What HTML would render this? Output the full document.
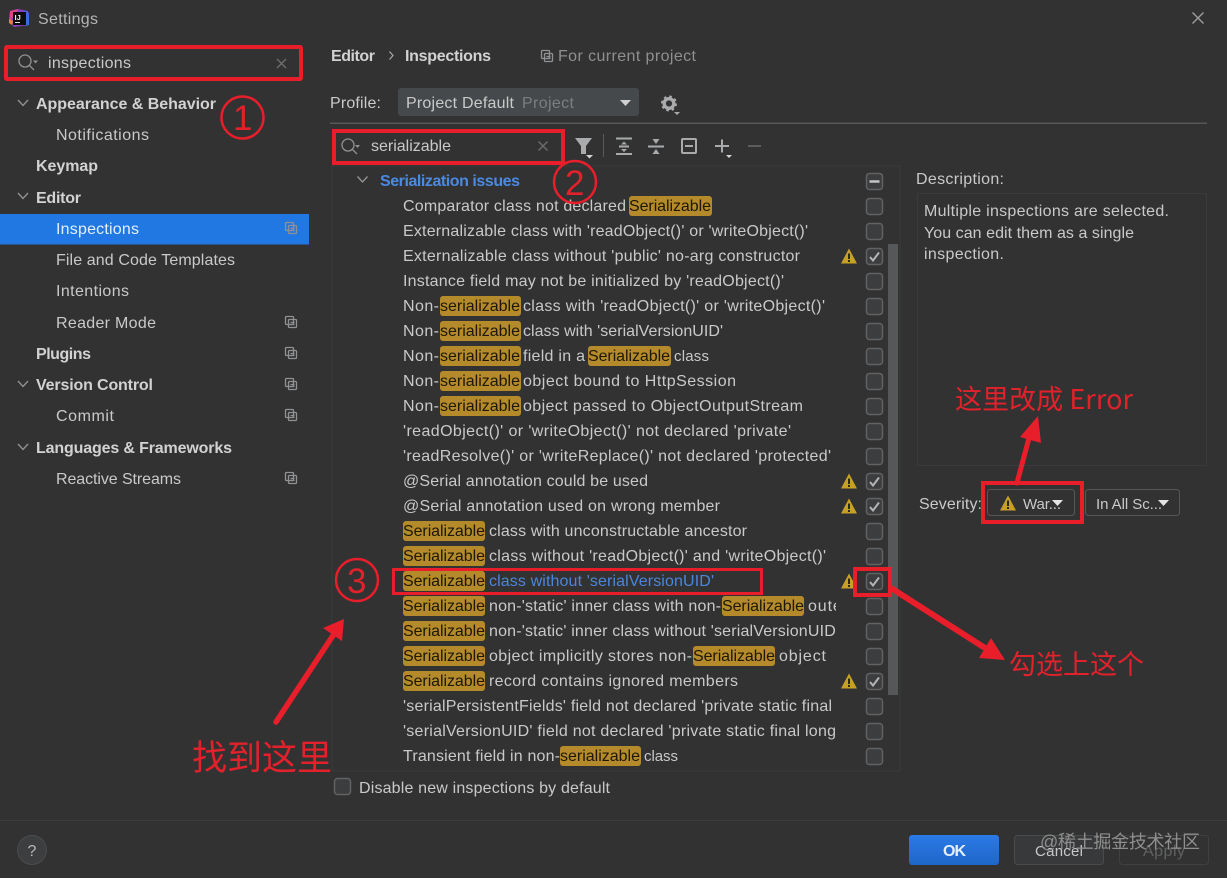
<!DOCTYPE html>
<html lang="en"><head><meta charset="utf-8"><title>Settings</title>
<style>
html,body{margin:0;padding:0;background:#323233;width:1227px;height:878px;overflow:hidden}
svg{display:block}
text{font-family:"Liberation Sans","Noto Sans CJK SC",sans-serif;font-size:16px;fill:#c9c9c9}
.b{font-weight:bold;fill:#d2d2d2}
.h{fill:#b48a2a}
.d{fill:#1d1808}
.s{font-size:15px}
.box{fill:#3b3d3e;stroke:#606263;stroke-width:1.5}
.ck{fill:none;stroke:#b4b4b4;stroke-width:2}
.r{fill:none;stroke:#e81f2b}
.a{font-family:"Noto Sans CJK SC","Liberation Sans",sans-serif;fill:#e2212b}
.ic{fill:none;stroke:#8f9192;stroke-width:1.3}
.t{fill:#c8a028}
.tb{fill:none;stroke:#a8aaab;stroke-width:2}
.n{fill:#e2212b;font-size:35px}
</style></head><body>
<svg width="1227" height="878" viewBox="0 0 1227 878" xmlns="http://www.w3.org/2000/svg">
<defs>
<clipPath id="c"><rect x="333" y="168" width="503" height="602"/></clipPath>
<linearGradient id="ok" x1="0" y1="0" x2="0" y2="1"><stop offset="0" stop-color="#2a7ae6"/><stop offset="1" stop-color="#1f66c9"/></linearGradient>
<g id="w"><path d="M7 -0.5L15 14.500H-1Z" class="t"/><rect x="6" y="4.500" width="2" height="5.500" fill="#2a2a22"/><rect x="6" y="11" width="2" height="2" fill="#2a2a22"/></g>
<g id="p"><rect x="0.5" y="0.5" width="8" height="8" class="ic" rx="1"/><rect x="3.5" y="3.5" width="8" height="8" class="ic" fill="#323233" rx="1"/><path d="M5.5 6.5h4M5.5 8.5h4" class="ic"/></g>
</defs>
<rect width="1227" height="878" fill="#323233"/>

<!-- title -->
<path d="M10 11L18 9L28 11L29 25L14 27L9 21Z" fill="#8a3fc0"/><path d="M10 11L18 9L15 16L9 21Z" fill="#e0428a"/><path d="M9 19L13 21L12 25L9 23Z" fill="#f08030"/><path d="M24 10L29 13L29 25L25 26Z" fill="#3a6be0"/>
<rect x="13" y="12" width="13" height="13" fill="#0d0d0d"/>
<text x="14.5" y="20" style="font-size:7.5px;font-weight:bold;fill:#eee">IJ</text><rect x="15" y="22" width="5" height="1" fill="#ddd"/>
<text x="38" y="24" textLength="60" style="fill:#b5b5b5">Settings</text>
<path d="M1192.500 12.500L1203.500 23.500M1203.500 12.500L1192.500 23.500" stroke="#a0a0a0" stroke-width="1.3" fill="none"/>

<!-- sidebar -->
<rect x="0" y="214" width="309" height="30.500" fill="#2278e2"/>
<circle cx="25" cy="61" r="6" class="ic"/><path d="M29.500 65.500L34 70" class="ic"/><path d="M33 60.500h5l-2.500 3z" fill="#8f9192"/>
<text x="48" y="68" textLength="83">inspections</text>
<path d="M277 59L286 68M286 59L277 68" stroke="#6c6e6f" stroke-width="1.3" fill="none"/>
<g fill="none" stroke="#8f9192" stroke-width="1.4"><path d="M18 100L23 105.500L28 100"/><path d="M18 193L23 198.500L28 193"/><path d="M18 381L23 386.500L28 381"/><path d="M18 444L23 449.500L28 444"/></g>
<text x="36" y="109" class="b" textLength="180">Appearance &amp; Behavior</text>
<text x="56" y="140" textLength="93">Notifications</text>
<text x="36" y="171" class="b" textLength="62">Keymap</text>
<text x="36" y="203" class="b" textLength="45">Editor</text>
<text x="56" y="234" textLength="83" style="fill:#e4eefa">Inspections</text>
<text x="56" y="265" textLength="179">File and Code Templates</text>
<text x="56" y="296" textLength="73">Intentions</text>
<text x="56" y="328" textLength="100">Reader Mode</text>
<text x="36" y="359" class="b" textLength="55">Plugins</text>
<text x="36" y="390" class="b" textLength="117">Version Control</text>
<text x="56" y="421" textLength="58">Commit</text>
<text x="36" y="453" class="b" textLength="196">Languages &amp; Frameworks</text>
<text x="56" y="484" textLength="125">Reactive Streams</text>
<use href="#p" x="285" y="222"/><use href="#p" x="285" y="316"/><use href="#p" x="285" y="347"/><use href="#p" x="285" y="378"/><use href="#p" x="285" y="409"/><use href="#p" x="285" y="472"/>

<!-- header -->
<text x="331" y="61" class="b" textLength="44">Editor</text>
<path d="M389.500 51.500L393 55.500L389.500 59.500" fill="none" stroke="#a8a8a8" stroke-width="1.200"/>
<text x="405" y="61" class="b" textLength="86">Inspections</text>
<use href="#p" x="541" y="50"/>
<text x="558" y="61" textLength="138" style="fill:#8f8f8f">For current project</text>
<text x="330" y="108" textLength="51">Profile:</text>
<rect x="398" y="88" width="241" height="28" rx="3" fill="#46494b"/>
<text x="406" y="108" textLength="108">Project Default</text>
<text x="522" y="108" textLength="52" style="fill:#7b7d7e">Project</text>
<path d="M620 100h11l-5.500 6z" fill="#d0d0d0"/>
<circle cx="669" cy="103.500" r="4.800" fill="none" stroke="#a9abac" stroke-width="3.400"/>
<circle cx="669" cy="103.500" r="7" fill="none" stroke="#a9abac" stroke-width="2" stroke-dasharray="2.600 2.900"/>
<path d="M674 112h6l-3 3z" fill="#a9abac"/>
<rect x="330" y="122.500" width="877" height="1.500" fill="#565758"/>

<!-- toolbar -->
<circle cx="348" cy="145" r="6" class="ic"/><path d="M352.500 149.500L357 154" class="ic"/><path d="M355 145h5l-2.500 3z" fill="#8f9192"/>
<text x="371" y="151" textLength="80">serializable</text>
<path d="M538.500 141.500L547.500 150.500M547.500 141.500L538.500 150.500" stroke="#6c6e6f" stroke-width="1.300" fill="none"/>
<path d="M575 138h17l-6 8v8h-5v-8z" fill="#a9abac"/><path d="M586 155h7l-3.500 3.500z" fill="#d5d5d5"/>
<rect x="603" y="134" width="1" height="23" fill="#58595a"/>
<g class="tb"><path d="M616 138.500h16M616 154h16M619 146.500h10"/></g>
<path d="M624 141.500l3 3h-6zM624 152l3-3h-6z" fill="#a8aaab"/>
<g class="tb"><path d="M648 146.500h16"/></g><path d="M656 144l-3.500-5h7zM656 149l-3.500 5h7z" fill="#a8aaab"/>
<rect x="682" y="139" width="14" height="14" rx="1" class="tb"/><path d="M685 146h8" class="tb"/>
<path d="M722 139.500v13M715 146h14" class="tb"/><path d="M726 155h6l-3 3z" fill="#d5d5d5"/>
<path d="M748 146h13" stroke="#5a5c5d" stroke-width="2" fill="none"/>

<!-- list frame -->
<path d="M332 166H900V771H332Z" fill="none" stroke="#38393a"/>
<path d="M357.500 176.500L362.500 182L367.500 176.500" fill="none" stroke="#8f9192" stroke-width="1.400"/>
<text x="380" y="186" textLength="140" style="fill:#4a8ae0;font-weight:bold">Serialization issues</text>
<rect x="888" y="244" width="10" height="451" fill="#565758"/>

<g clip-path="url(#c)">
<rect class="h" x="629" y="196" width="83" height="20" rx="3"/>
<rect class="h" x="440" y="296" width="81" height="20" rx="3"/>
<rect class="h" x="440" y="321" width="81" height="20" rx="3"/>
<rect class="h" x="440" y="346" width="81" height="20" rx="3"/>
<rect class="h" x="588" y="346" width="83" height="20" rx="3"/>
<rect class="h" x="440" y="371" width="81" height="20" rx="3"/>
<rect class="h" x="440" y="396" width="81" height="20" rx="3"/>
<rect class="h" x="403" y="521" width="82" height="20" rx="3"/>
<rect class="h" x="403" y="546" width="82" height="20" rx="3"/>
<rect class="h" x="403" y="571" width="82" height="20" rx="3"/>
<rect class="h" x="403" y="596" width="82" height="20" rx="3"/>
<rect class="h" x="722" y="596" width="82" height="20" rx="3"/>
<rect class="h" x="403" y="621" width="82" height="20" rx="3"/>
<rect class="h" x="403" y="646" width="82" height="20" rx="3"/>
<rect class="h" x="693" y="646" width="82" height="20" rx="3"/>
<rect class="h" x="403" y="671" width="82" height="20" rx="3"/>
<rect class="h" x="560" y="746" width="81" height="20" rx="3"/>

<text x="403" y="211" textLength="223">Comparator class not declared</text>
<text x="629" y="211" textLength="82" class="d">Serializable</text>
<text x="403" y="236" textLength="405">Externalizable class with 'readObject()' or 'writeObject()'</text>
<text x="403" y="261" textLength="397">Externalizable class without 'public' no-arg constructor</text>
<text x="403" y="286" textLength="381">Instance field may not be initialized by 'readObject()'</text>
<text x="403" y="311" textLength="36">Non-</text><text x="440" y="311" textLength="80" class="d">serializable</text><text x="523" y="311" textLength="302">class with 'readObject()' or 'writeObject()'</text>
<text x="403" y="336" textLength="36">Non-</text><text x="440" y="336" textLength="80" class="d">serializable</text><text x="523" y="336" textLength="200">class with 'serialVersionUID'</text>
<text x="403" y="361" textLength="36">Non-</text><text x="440" y="361" textLength="80" class="d">serializable</text><text x="523" y="361" textLength="62">field in a</text><text x="588" y="361" textLength="82" class="d">Serializable</text><text x="674" y="361" textLength="35" class="s">class</text>
<text x="403" y="386" textLength="36">Non-</text><text x="440" y="386" textLength="80" class="d">serializable</text><text x="523" y="386" textLength="213">object bound to HttpSession</text>
<text x="403" y="411" textLength="36">Non-</text><text x="440" y="411" textLength="80" class="d">serializable</text><text x="523" y="411" textLength="280">object passed to ObjectOutputStream</text>
<text x="403" y="436" textLength="388">'readObject()' or 'writeObject()' not declared 'private'</text>
<text x="403" y="461" textLength="428">'readResolve()' or 'writeReplace()' not declared 'protected'</text>
<text x="403" y="486" textLength="245">@Serial annotation could be used</text>
<text x="403" y="511" textLength="317">@Serial annotation used on wrong member</text>
<text x="403" y="536" textLength="82" class="d">Serializable</text><text x="489" y="536" textLength="258">class with unconstructable ancestor</text>
<text x="403" y="561" textLength="82" class="d">Serializable</text><text x="489" y="561" textLength="337">class without 'readObject()' and 'writeObject()'</text>
<text x="403" y="586" textLength="82" class="d">Serializable</text><text x="489" y="586" textLength="225" style="fill:#4a86dc">class without 'serialVersionUID'</text>
<text x="403" y="611" textLength="82" class="d">Serializable</text><text x="489" y="611" textLength="232">non-'static' inner class with non-</text><text x="722" y="611" textLength="82" class="d">Serializable</text><text x="808" y="611" textLength="40">outer</text>
<text x="403" y="636" textLength="82" class="d">Serializable</text><text x="489" y="636" textLength="350">non-'static' inner class without 'serialVersionUID'</text>
<text x="403" y="661" textLength="82" class="d">Serializable</text><text x="489" y="661" textLength="203">object implicitly stores non-</text><text x="693" y="661" textLength="82" class="d">Serializable</text><text x="779" y="661" textLength="47">object</text>
<text x="403" y="686" textLength="82" class="d">Serializable</text><text x="489" y="686" textLength="249">record contains ignored members</text>
<text x="403" y="711" textLength="429">'serialPersistentFields' field not declared 'private static final</text>
<text x="403" y="736" textLength="433">'serialVersionUID' field not declared 'private static final long</text>
<text x="403" y="761" textLength="157">Transient field in non-</text><text x="560" y="761" textLength="80" class="d">serializable</text><text x="644" y="761" textLength="34" class="s">class</text>
</g>

<!-- checkboxes -->
<rect class="box" x="866.500" y="173.500" width="16" height="16" rx="3"/><path d="M869.500 181.500h10" stroke="#c5c5c5" stroke-width="2.500"/>
<rect class="box" x="866.500" y="198.500" width="16" height="16" rx="3"/>
<rect class="box" x="866.500" y="223.500" width="16" height="16" rx="3"/>
<rect class="box" x="866.500" y="248.500" width="16" height="16" rx="3"/><path class="ck" d="M870 257l3 3.500 6-8"/>
<rect class="box" x="866.500" y="273.500" width="16" height="16" rx="3"/>
<rect class="box" x="866.500" y="298.500" width="16" height="16" rx="3"/>
<rect class="box" x="866.500" y="323.500" width="16" height="16" rx="3"/>
<rect class="box" x="866.500" y="348.500" width="16" height="16" rx="3"/>
<rect class="box" x="866.500" y="373.500" width="16" height="16" rx="3"/>
<rect class="box" x="866.500" y="398.500" width="16" height="16" rx="3"/>
<rect class="box" x="866.500" y="423.500" width="16" height="16" rx="3"/>
<rect class="box" x="866.500" y="448.500" width="16" height="16" rx="3"/>
<rect class="box" x="866.500" y="473.500" width="16" height="16" rx="3"/><path class="ck" d="M870 482l3 3.500 6-8"/>
<rect class="box" x="866.500" y="498.500" width="16" height="16" rx="3"/><path class="ck" d="M870 507l3 3.500 6-8"/>
<rect class="box" x="866.500" y="523.500" width="16" height="16" rx="3"/>
<rect class="box" x="866.500" y="548.500" width="16" height="16" rx="3"/>
<rect class="box" x="866.500" y="573.500" width="16" height="16" rx="3"/><path class="ck" d="M870 582l3 3.500 6-8"/>
<rect class="box" x="866.500" y="598.500" width="16" height="16" rx="3"/>
<rect class="box" x="866.500" y="623.500" width="16" height="16" rx="3"/>
<rect class="box" x="866.500" y="648.500" width="16" height="16" rx="3"/>
<rect class="box" x="866.500" y="673.500" width="16" height="16" rx="3"/><path class="ck" d="M870 682l3 3.500 6-8"/>
<rect class="box" x="866.500" y="698.500" width="16" height="16" rx="3"/>
<rect class="box" x="866.500" y="723.500" width="16" height="16" rx="3"/>
<rect class="box" x="866.500" y="748.500" width="16" height="16" rx="3"/>
<use href="#w" x="842" y="249"/><use href="#w" x="842" y="474"/><use href="#w" x="842" y="499"/><use href="#w" x="842" y="574"/><use href="#w" x="842" y="674"/>

<!-- description -->
<text x="916" y="184" textLength="88">Description:</text>
<rect x="917.500" y="193.500" width="289" height="272" fill="none" stroke="#3a3b3c"/>
<text x="924" y="216" textLength="245">Multiple inspections are selected.</text>
<text x="924" y="238" textLength="210">You can edit them as a single</text>
<text x="924" y="259" textLength="80">inspection.</text>
<text x="919" y="509" textLength="63">Severity:</text>
<rect x="987.500" y="489.500" width="87" height="26" rx="3" fill="none" stroke="#565758"/>
<use href="#w" x="1001" y="496"/>
<text x="1023" y="509" textLength="38" class="s">War...</text>
<path d="M1052 500h11l-5.500 6z" fill="#e4e4e4"/>
<rect x="1085.500" y="489.500" width="94" height="26" rx="3" fill="none" stroke="#565758"/>
<text x="1096" y="509" textLength="66" class="s">In All Sc...</text>
<path d="M1158 500h11l-5.500 6z" fill="#e4e4e4"/>

<!-- bottom -->
<rect class="box" x="334.500" y="778.500" width="16" height="16" rx="3"/>
<text x="359" y="793" textLength="251">Disable new inspections by default</text>
<rect x="0" y="820" width="1227" height="1" fill="#3c3d3e"/>
<circle cx="32" cy="850" r="14.500" fill="#3c3e40" stroke="#4a4c4d"/>
<text x="27.500" y="856" textLength="9" style="fill:#b8b8b8">?</text>
<rect x="909" y="835" width="90" height="30" rx="3" fill="url(#ok)"/>
<text x="943" y="856" textLength="23" class="b" style="fill:#e4effc">OK</text>
<rect x="1014.500" y="835.500" width="89" height="29" rx="3" fill="#37393a" stroke="#4a4b4c"/>
<text x="1035" y="856" textLength="48" class="s">Cancel</text>
<rect x="1119.500" y="835.500" width="89" height="29" rx="3" fill="none" stroke="#3f4041"/>
<text x="1143" y="856" textLength="42" style="fill:#5f6061">Apply</text>
<text x="1040" y="848" style="font-size:18px;fill:#8e8e8e" textLength="160">@稀土掘金技术社区</text>

<!-- annotations -->
<rect class="r" x="6" y="47" width="295" height="32" rx="1" stroke-width="4"/>
<rect class="r" x="334" y="131" width="229" height="32" stroke-width="4"/>
<rect class="r" x="983" y="483" width="99" height="39" stroke-width="4"/>
<rect class="r" x="855" y="569" width="35" height="26" stroke-width="4"/>
<rect class="r" x="393.500" y="569.500" width="368" height="24" stroke-width="3"/>
<circle class="r" cx="242.500" cy="117.500" r="21" stroke-width="2.500"/>
<text class="n" x="233" y="130" textLength="19">1</text>
<circle class="r" cx="575" cy="182" r="21" stroke-width="2.500"/>
<text class="n" x="565" y="195" textLength="20">2</text>
<circle class="r" cx="357" cy="580" r="21" stroke-width="2.500"/>
<text class="n" x="347" y="593" textLength="20">3</text>
<text class="a" x="955" y="409" style="font-size:27px" textLength="178">这里改成 Error</text>
<text class="a" x="1009" y="674" style="font-size:27px">勾选上这个</text>
<text class="a" x="192" y="770" style="font-size:35px">找到这里</text>
<path d="M1017 483L1029 438" stroke="#e81f2b" stroke-width="5" stroke-linecap="round"/><path d="M1038 416L1020 437L1041 443Z" fill="#e81f2b"/>
<path d="M891 588L985 648" stroke="#e81f2b" stroke-width="6"/><path d="M1005 660L979 658L991 638Z" fill="#e81f2b"/>
<path d="M276 722L334 634" stroke="#e81f2b" stroke-width="5.500" stroke-linecap="round"/><path d="M344 619L323 628L342 641Z" fill="#e81f2b"/>
</svg>
</body></html>
